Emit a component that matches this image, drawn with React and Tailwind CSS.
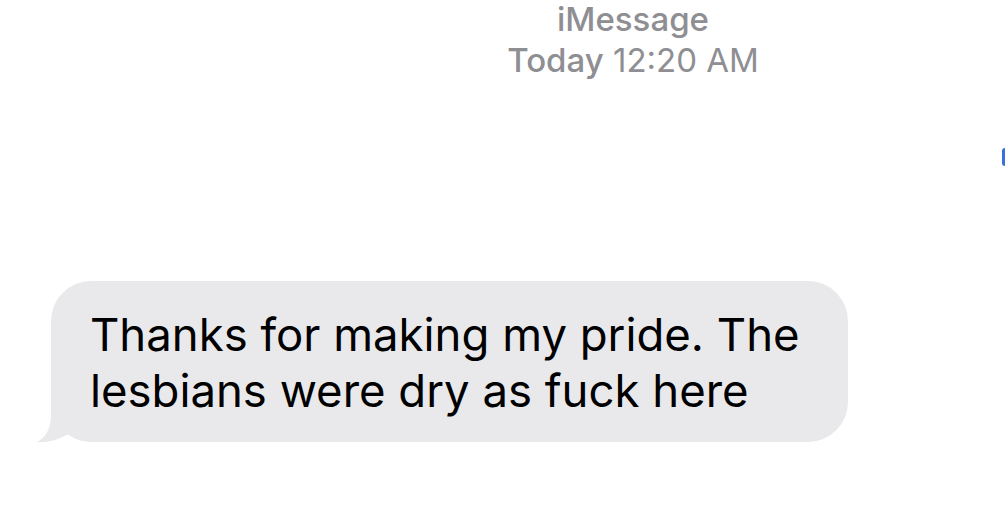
import React from 'react';

const font = { fontFamily: 'Inter, "Noto Sans", sans-serif' };

const Header = () => (
  <div className="flex flex-col items-center pl-[261px] pt-[1px] text-[33px] text-[#8e8e93]">
    <div className="leading-[36px] font-medium">iMessage</div>
    <div className="leading-[46px]">
      <span className="font-medium">Today</span> 12:20 AM
    </div>
  </div>
);

const Bubble = ({ children }) => (
  <div className="relative ml-[51px] w-[797px] rounded-[40px] bg-[#e9e9eb] pl-[39px] pr-[30px] pt-[26px] pb-[23px]">
    {/* tail */}
    <svg className="absolute left-[-16px] bottom-0" width="60" height="40" viewBox="0 0 60 40">
      <path d="M16 0 L16 12 C16 28 10 36 2 40 C14 41 25 37 33 32 L40 0 Z" fill="#e9e9eb" />
    </svg>
    <p className="relative text-[45.5px] leading-[56px] text-black">{children}</p>
  </div>
);

const App = () => {
  return (
    <div className="w-[1005px] h-[514px] bg-white overflow-hidden" style={font}>
      <Header />
      <div className="mt-[65px] flex justify-end">
        <div className="w-[3px] h-[18px] rounded-l-full bg-[#3a6fe0]"></div>
      </div>
      <div className="mt-[115px]">
        <Bubble>Thanks for making my pride. The lesbians were dry as fuck here</Bubble>
      </div>
    </div>
  );
};

export default App;
